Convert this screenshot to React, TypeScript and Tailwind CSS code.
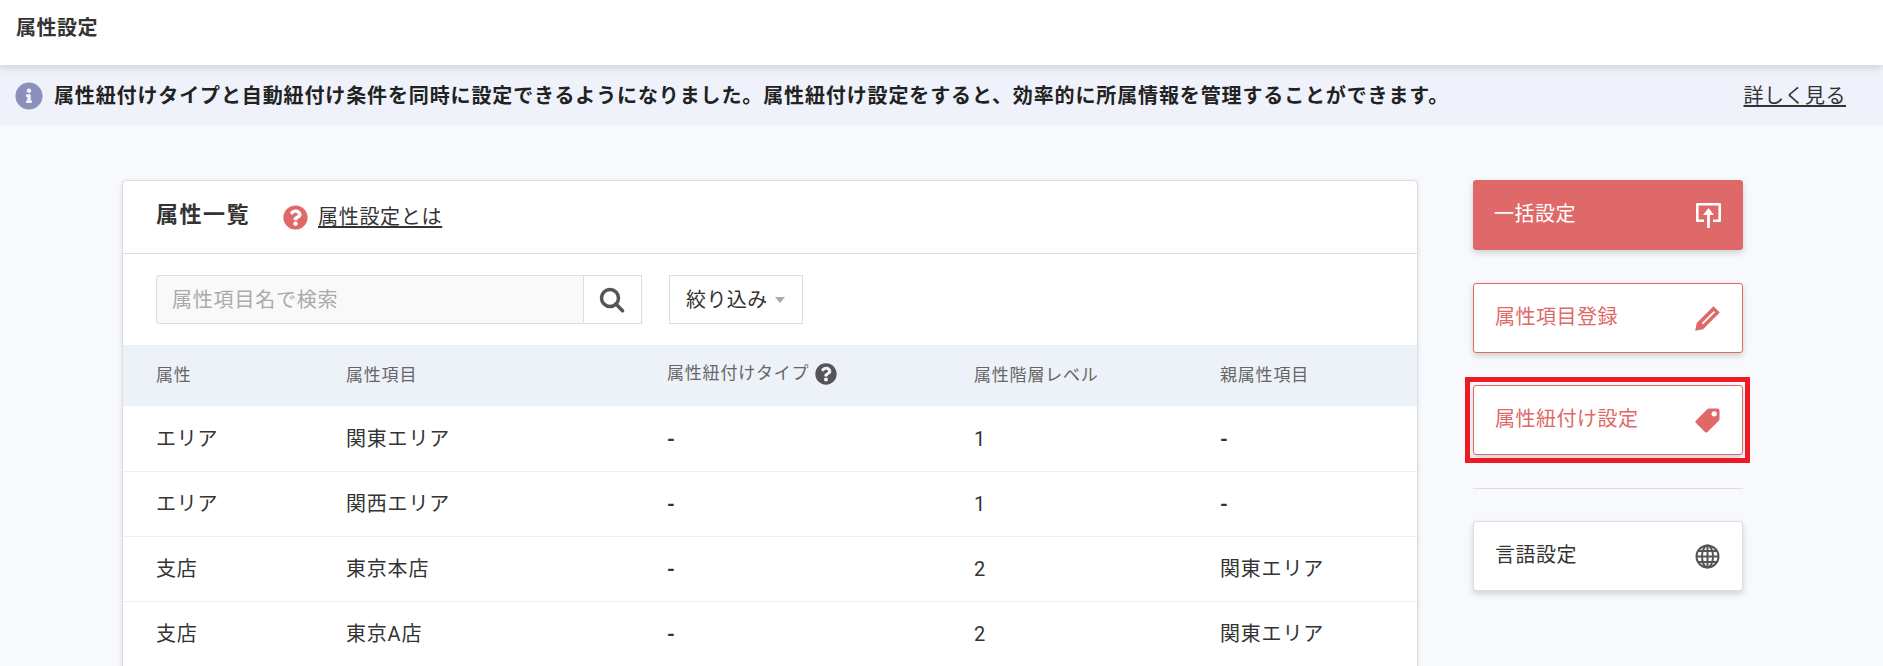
import React from "react";
import { FaInfoCircle, FaQuestionCircle } from "react-icons/fa";

const rows = [
  ["エリア", "関東エリア", "-", "1", "-"],
  ["エリア", "関西エリア", "-", "1", "-"],
  ["支店", "東京本店", "-", "2", "関東エリア"],
  ["支店", "東京A店", "-", "2", "関東エリア"],
];

function UploadIcon() {
  return (
    <svg width="25" height="25" viewBox="0 0 25 25" fill="none" stroke="#fff">
      <path d="M8 17.700H1.300V1.300h22.400v16.400H17" strokeWidth="2.600" strokeLinejoin="round" />
      <path d="M12.500 25V10" strokeWidth="2.800" />
      <path d="M12.500 5 18 12H7z" fill="#fff" stroke="none" />
    </svg>
  );
}

function PencilIcon() {
  return (
    <svg width="25" height="25" viewBox="0 0 25 25">
      <path
        fillRule="evenodd"
        fill="#df6868"
        d="M18.500.2 24.800 6.500 8 23.300.2 24.800 1.700 17ZM18.800 4.900 6.800 16.900 8.100 18.200 20.100 6.200Z"
      />
    </svg>
  );
}

function TagIcon() {
  return (
    <svg width="25" height="25" viewBox="0 0 25 25">
      <path
        fillRule="evenodd"
        fill="#df6868"
        d="M14 .5H22.500A2 2 0 0 1 24.500 2.500V11A2 2 0 0 1 24 12.500L12.500 24a1.800 1.800 0 0 1-2.500 0L1 15a1.800 1.800 0 0 1 0-2.500L12.500 1A2 2 0 0 1 14 .5ZM19.200 3.200a2.700 2.700 0 1 0 .01 0Z"
      />
    </svg>
  );
}

function GlobeIcon() {
  return (
    <svg width="25" height="25" viewBox="0 0 25 25" fill="none" stroke="#555" strokeWidth="2">
      <circle cx="12.500" cy="12.500" r="11" />
      <ellipse cx="12.500" cy="12.500" rx="5.500" ry="11" />
      <path d="M12.500 1.500v22M1.500 12.500h22M3.200 7h18.600M3.200 18h18.600" />
    </svg>
  );
}

function SearchIcon() {
  return (
    <svg width="26" height="26" viewBox="0 0 26 26" fill="none" stroke="#555" strokeWidth="3.500">
      <circle cx="11" cy="11" r="8.500" />
      <path d="M17 17 23.500 23.800" strokeLinecap="round" />
    </svg>
  );
}

function SideButton({ label, icon, className }: { label: string; icon: React.ReactNode; className: string }) {
  return (
    <button className={`w-[270px] h-[70px] flex items-center justify-between pl-[21px] pr-[22px] rounded-[3px] text-[20px] tracking-[0.5px] shadow-[0_3px_6px_rgba(0,0,0,0.16)] ${className}`}>
      <span className="pb-[2px]">{label}</span>
      {icon}
    </button>
  );
}

const cols = "grid grid-cols-[190px_321px_307px_246px_1fr] items-center pl-[33px]";

export default function App() {
  return (
    <div className="h-[666px] overflow-hidden bg-[#f7f9fc] text-[#333333] font-['Roboto','Noto_Sans_CJK_JP',sans-serif]">
      <header className="relative z-10 h-[65px] bg-white shadow-[0_2px_8px_rgba(0,0,0,0.16)] flex items-start pt-[14px] pl-[16px]">
        <h1 className="text-[20px] leading-[28px] font-bold tracking-[0.5px]">属性設定</h1>
      </header>

      <div className="h-[61px] bg-[#eff2fa] flex items-center pl-[15px] pr-[37px]">
        <FaInfoCircle className="text-[#8a90b9] w-[28px] h-[28px] shrink-0" />
        <p className="ml-[11px] text-[20px] font-bold tracking-[0.87px] text-[#222222] flex-1 whitespace-nowrap">
          属性紐付けタイプと自動紐付け条件を同時に設定できるようになりました。属性紐付け設定をすると、効率的に所属情報を管理することができます。
        </p>
        <a className="text-[20px] tracking-[0.5px] underline underline-offset-2">詳しく見る</a>
      </div>

      <main className="flex items-start pl-[122px] pt-[54px] gap-[55px]">
        <section className="w-[1296px] h-[600px] shrink-0 bg-white border border-[#dddddd] rounded-[5px] shadow-[0_1px_4px_rgba(0,0,0,0.12)] overflow-hidden">
          <div className="h-[73px] border-b border-[#dddddd] flex items-center pl-[33px]">
            <h2 className="text-[22px] font-bold tracking-[1.500px] w-[127px] mb-[5px]">属性一覧</h2>
            <FaQuestionCircle className="text-[#df6868] w-[25px] h-[25px]" />
            <a className="ml-[10px] text-[20px] tracking-[0.7px] underline underline-offset-2">属性設定とは</a>
          </div>

          <div className="h-[91px] flex items-center pl-[33px]">
            <div className="w-[428px] h-[49px] bg-[#f9f9f9] border border-[#dddddd] rounded-l-[3px] flex items-center pl-[15px] text-[20px] tracking-[0.8px] text-[#aaaaaa]">
              属性項目名で検索
            </div>
            <button className="w-[58px] h-[49px] border border-l-0 border-[#dddddd] flex items-center justify-center pr-[2px]">
              <SearchIcon />
            </button>
            <button className="ml-[27px] w-[134px] h-[49px] border border-[#dddddd] flex items-center pl-[16px] text-[20px] tracking-[0.4px]">
              絞り込み
              <span className="ml-[7px] w-0 h-0 border-x-[5px] border-x-transparent border-t-[6px] border-t-[#aaaaaa]" />
            </button>
          </div>

          <div className={`h-[61px] bg-[#edf1f8] ${cols} text-[17px] tracking-[0.8px] text-[#666666]`}>
            <div className="pt-[1px]">属性</div>
            <div className="pt-[1px]">属性項目</div>
            <div className="flex items-center gap-[6px] pb-[3px]">
              属性紐付けタイプ
              <FaQuestionCircle className="text-[#555555] w-[22px] h-[22px]" />
            </div>
            <div className="pt-[1px]">属性階層レベル</div>
            <div className="pt-[1px]">親属性項目</div>
          </div>

          <div className="pt-[1px]">
            {rows.map((r, i) => (
              <div key={i} className={`h-[65px] border-b border-[#f0f0f0] ${cols} text-[20px] tracking-[0.8px]`}>
                {r.map((c, j) => (
                  <div key={j} className={c === "-" ? "font-bold" : ""}>{c}</div>
                ))}
              </div>
            ))}
          </div>
        </section>

        <aside className="flex flex-col w-[270px] shrink-0">
          <SideButton label="一括設定" icon={<UploadIcon />} className="bg-[#df6868] text-white" />
          <SideButton label="属性項目登録" icon={<PencilIcon />} className="mt-[33px] bg-white border border-[#df6868] text-[#df6868]" />
          <div className="relative mt-[32px]">
            <SideButton label="属性紐付け設定" icon={<TagIcon />} className="bg-white border border-[#df6868] text-[#df6868]" />
            <div className="absolute -left-[8px] -right-[7px] -top-[8px] -bottom-[8px] border-[5px] border-[#ed1c24]" />
          </div>
          <hr className="mt-[33px] border-t border-[#dddddd]" />
          <SideButton label="言語設定" icon={<GlobeIcon />} className="mt-[32px] bg-white border border-[#dddddd]" />
        </aside>
      </main>
    </div>
  );
}
